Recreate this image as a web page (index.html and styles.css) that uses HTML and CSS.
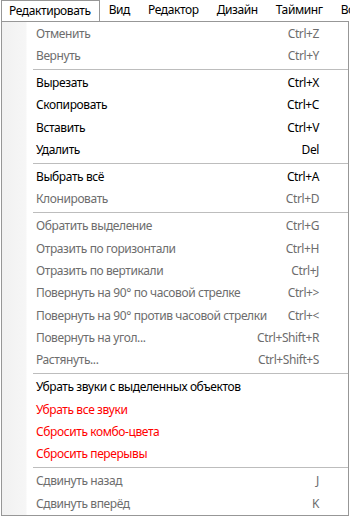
FILE: index.html
```html
<!DOCTYPE html>
<html>
<head>
    <title>Редактировать</title>
    <link rel="stylesheet" href="styles.css">
</head>
<body>
    <div class="menubar">
        <span class="top active">Редактировать</span>
        <span class="top">Вид</span>
        <span class="top">Редактор</span>
        <span class="top">Дизайн</span>
        <span class="top">Тайминг</span>
        <span class="top">Во</span>
    </div>

    <div class="dropdown">
        <div class="item off"><span class="label">Отменить</span><span class="key">Ctrl+Z</span></div>
        <div class="item off"><span class="label">Вернуть</span><span class="key">Ctrl+Y</span></div>
        <div class="sep"></div>
        <div class="item"><span class="label">Вырезать</span><span class="key">Ctrl+X</span></div>
        <div class="item"><span class="label">Скопировать</span><span class="key">Ctrl+C</span></div>
        <div class="item"><span class="label">Вставить</span><span class="key">Ctrl+V</span></div>
        <div class="item"><span class="label">Удалить</span><span class="key">Del</span></div>
        <div class="sep"></div>
        <div class="item"><span class="label">Выбрать всё</span><span class="key">Ctrl+A</span></div>
        <div class="item off"><span class="label">Клонировать</span><span class="key">Ctrl+D</span></div>
        <div class="sep"></div>
        <div class="item off"><span class="label">Обратить выделение</span><span class="key">Ctrl+G</span></div>
        <div class="item off"><span class="label">Отразить по горизонтали</span><span class="key">Ctrl+H</span></div>
        <div class="item off"><span class="label">Отразить по вертикали</span><span class="key">Ctrl+J</span></div>
        <div class="item off"><span class="label">Повернуть на 90° по часовой стрелке</span><span class="key">Ctrl+&gt;</span></div>
        <div class="item off"><span class="label">Повернуть на 90° против часовой стрелки</span><span class="key">Ctrl+&lt;</span></div>
        <div class="item off"><span class="label">Повернуть на угол...</span><span class="key">Ctrl+Shift+R</span></div>
        <div class="item off"><span class="label">Растянуть...</span><span class="key">Ctrl+Shift+S</span></div>
        <div class="sep"></div>
        <div class="item"><span class="label">Убрать звуки с выделенных объектов</span></div>
        <div class="item danger"><span class="label">Убрать все звуки</span></div>
        <div class="item danger"><span class="label">Сбросить комбо-цвета</span></div>
        <div class="item danger"><span class="label">Сбросить перерывы</span></div>
        <div class="sep"></div>
        <div class="item off"><span class="label">Сдвинуть назад</span><span class="key">J</span></div>
        <div class="item off"><span class="label">Сдвинуть вперёд</span><span class="key">K</span></div>
    </div>
</body>
</html>
```

FILE: styles.css
```css
body {
    margin: 0;
    background: #fff;
    font-family: "Noto Sans", "Open Sans", sans-serif;
    font-size: 12px;
    letter-spacing: -0.4px;
    color: #000;
    width: 350px;
    height: 517px;
    overflow: hidden;
}
.menubar {
    display: flex;
    height: 21px;
    padding-left: 1px;
    box-sizing: border-box;
    overflow: hidden;
}
.top {
    padding: 0 9px;
    line-height: 20px;
    white-space: nowrap;
}
.active {
    padding: 0 8px 0 7px;
    border: 1px solid #979797;
    border-bottom: none;
    background: #fff;
    line-height: 19px;
    position: relative;
    z-index: 1;
    margin-bottom: -1px;
    height: 20px;
}
.dropdown {
    margin-left: 1px;
    width: 348px;
    height: 495px;
    box-sizing: border-box;
    border: 1px solid #979797;
    background: linear-gradient(to right, #f1f1f1 0, #f6f6f6 24px, #fff 25px);
}
.item {
    display: flex;
    align-items: center;
    height: 22.33px;
    padding: 0 29px 0 34px;
    white-space: nowrap;
}
.label {
    flex: 1;
}
.key {
    text-align: right;
}
.off {
    color: #6d6d6d;
}
.danger {
    color: #f00;
}
.sep {
    height: 4.67px;
    margin-left: 31px;
    position: relative;
}
.sep::after {
    content: "";
    position: absolute;
    left: 0;
    right: 0;
    top: 2px;
    border-top: 1px solid #bdbdbd;
}
```
